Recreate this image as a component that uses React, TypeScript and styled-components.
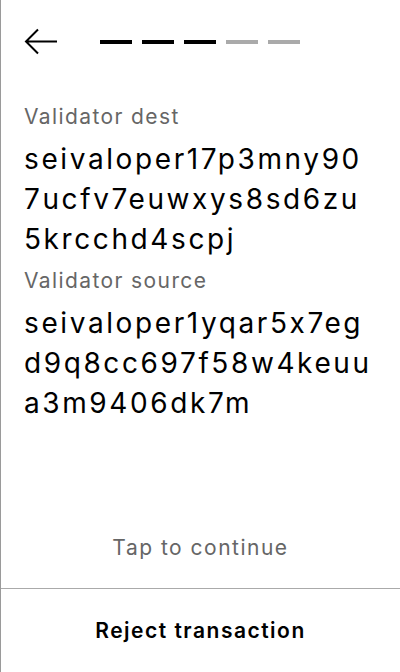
import React from "react";
import styled, { createGlobalStyle } from "styled-components";

const GlobalStyle = createGlobalStyle`
  html, body {
    margin: 0;
    padding: 0;
    background: #fff;
  }
  body {
    font-family: Inter, "Noto Sans", sans-serif;
    font-feature-settings: "calt" 0;
    -webkit-font-smoothing: antialiased;
  }
`;

const fields = [
  {
    label: "Validator dest",
    value: "seivaloper17p3mny907ucfv7euwxys8sd6zu5krcchd4scpj",
  },
  {
    label: "Validator source",
    value: "seivaloper1yqar5x7egd9q8cc697f58w4keuua3m9406dk7m",
  },
];

const steps = [true, true, true, false, false];

const App = () => {
  return (
    <Screen>
      <GlobalStyle />
      <Header>
        <BackButton aria-label="Back">
          <svg width="34" height="28" viewBox="0 0 34 28" fill="none">
            <path
              d="M33 13.5H2M14 1.5L2 13.5L14 25.5"
              stroke="#000"
              strokeWidth="2"
            />
          </svg>
        </BackButton>
        <Steps>
          {steps.map((done, i) => (
            <Step key={i} done={done} />
          ))}
        </Steps>
      </Header>
      <Content>
        {fields.map((f) => (
          <Field key={f.label}>
            <Label>{f.label}</Label>
            <Value>{f.value}</Value>
          </Field>
        ))}
      </Content>
      <Continue>Tap to continue</Continue>
      <Footer>
        <RejectButton>Reject transaction</RejectButton>
      </Footer>
    </Screen>
  );
};

export default App;

const Screen = styled.div`
  height: 672px;
  box-sizing: border-box;
  border-left: 1px solid #9a9a9a;
  display: flex;
  flex-direction: column;
  overflow: hidden;
`;

const Header = styled.div`
  display: flex;
  align-items: center;
  height: 28px;
  padding: 28px 24px 0 23px;
`;

const BackButton = styled.div`
  display: flex;
  align-items: center;
  width: 34px;
  height: 28px;
`;

const Steps = styled.div`
  display: flex;
  gap: 10px;
  margin-left: 42px;
`;

const Step = styled.div<{ done: boolean }>`
  width: 32px;
  height: 4px;
  background: ${({ done }) => (done ? "#000" : "#aaa")};
`;

const Content = styled.div`
  display: flex;
  flex-direction: column;
  gap: 8px;
  padding: 47px 28px 0 23px;
  flex: 1;
`;

const Field = styled.div`
  display: flex;
  flex-direction: column;
  gap: 8px;
`;

const Label = styled.div`
  font-size: 21px;
  line-height: 28px;
  letter-spacing: 1.4px;
  color: #666;
`;

const Value = styled.div`
  font-size: 28px;
  line-height: 40px;
  letter-spacing: 2.6px;
  color: #000;
  word-break: break-all;
`;

const Continue = styled.div`
  text-align: center;
  font-size: 21px;
  line-height: 28px;
  letter-spacing: 1.5px;
  color: #666;
  padding-bottom: 26px;
`;

const Footer = styled.div`
  border-top: 1px solid #aaa;
  height: 83px;
  display: flex;
  align-items: center;
  justify-content: center;
`;

const RejectButton = styled.div`
  font-size: 21px;
  font-weight: 600;
  letter-spacing: 1.5px;
  color: #000;
`;
